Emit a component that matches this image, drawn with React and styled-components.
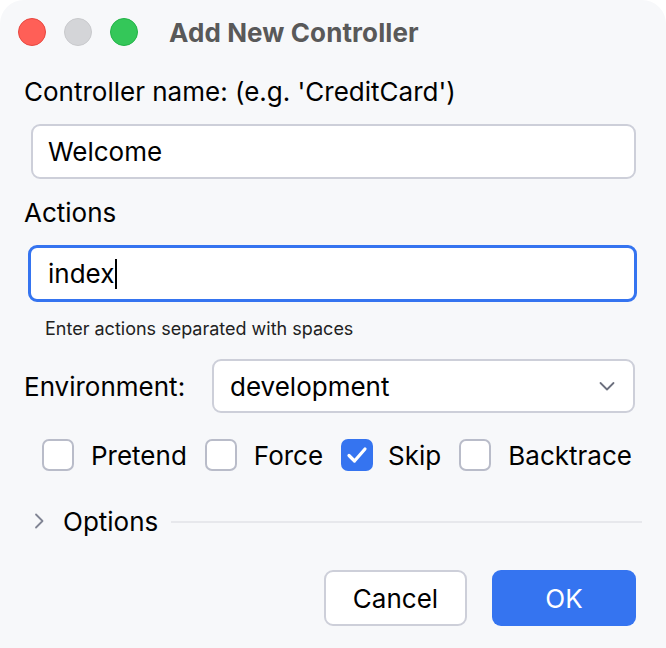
import React from "react";
import styled, { createGlobalStyle } from "styled-components";

const GlobalStyle = createGlobalStyle`
  html, body {
    margin: 0;
    padding: 0;
    background: #ffffff;
  }
  * {
    box-sizing: border-box;
  }
`;

const Window = styled.div`
  width: 666px;
  height: 648px;
  background: #f7f8fa;
  border-top-left-radius: 24px;
  border-top-right-radius: 24px;
  font-family: Inter, "Noto Sans", sans-serif;
  color: #000;
  display: flex;
  flex-direction: column;
  overflow: hidden;
`;

const TitleBar = styled.div`
  height: 64px;
  display: flex;
  align-items: center;
  padding-left: 18px;
  flex-shrink: 0;
`;

const Lights = styled.div`
  display: flex;
  gap: 18px;
`;

const Light = styled.div`
  width: 28px;
  height: 28px;
  border-radius: 50%;
  background: ${(p) => p.color};
  border: 1px solid ${(p) => p.edge};
`;

const Title = styled.div`
  margin-left: 31px;
  font-size: 26px;
  font-weight: 700;
  color: #595959;
  letter-spacing: 0.1px;
`;

const Body = styled.div`
  padding: 0 0 0 24px;
  display: flex;
  flex-direction: column;
`;

const Label = styled.div`
  font-size: 26px;
  line-height: 30px;
  margin-top: ${(p) => p.top}px;
`;

const Field = styled.div`
  height: ${(p) => (p.focused ? 57 : 55)}px;
  margin-top: 17px;
  margin-left: ${(p) => (p.focused ? 4 : 7)}px;
  margin-right: ${(p) => (p.focused ? 29 : 30)}px;
  background: #fff;
  border: ${(p) => (p.focused ? "3px solid #3574f0" : "2px solid #cdcfd9")};
  border-radius: 9px;
  display: flex;
  align-items: center;
  padding-left: ${(p) => (p.focused ? 17 : 15)}px;
  font-size: 26px;
`;

const Caret = styled.span`
  display: inline-block;
  width: 2px;
  height: 30px;
  background: #000;
  margin-left: 1px;
`;

const Hint = styled.div`
  font-size: 18px;
  line-height: 20px;
  margin-top: 17px;
  margin-left: 21px;
  color: #222;
`;

const EnvRow = styled.div`
  display: flex;
  align-items: center;
  margin-top: 20px;
  margin-right: 31px;
`;

const EnvLabel = styled.div`
  width: 188px;
  font-size: 26px;
  flex-shrink: 0;
`;

const Select = styled.div`
  flex: 1;
  height: 54px;
  background: #fff;
  border: 2px solid #cdcfd9;
  border-radius: 9px;
  display: flex;
  align-items: center;
  justify-content: space-between;
  padding: 0 18px 0 16px;
  font-size: 26px;
`;

const CheckRow = styled.div`
  display: flex;
  align-items: center;
  height: 32px;
  margin-top: 26px;
  padding-left: 18px;
`;

const CheckItem = styled.label`
  display: flex;
  align-items: center;
  gap: ${(p) => (p.checked ? 15 : 17)}px;
  margin-right: 18px;
  font-size: 26px;
`;

const Box = styled.span`
  width: 32px;
  height: 32px;
  border-radius: 7px;
  background: ${(p) => (p.checked ? "#3574f0" : "#fff")};
  border: ${(p) => (p.checked ? "none" : "2px solid #b9bcc9")};
  display: flex;
  align-items: center;
  justify-content: center;
`;

const OptionsRow = styled.div`
  display: flex;
  align-items: center;
  height: 30px;
  margin-top: 35px;
  padding-left: 10px;
  margin-right: 24px;
`;

const OptionsText = styled.span`
  font-size: 26px;
  margin-left: 19px;
`;

const Divider = styled.div`
  flex: 1;
  height: 2px;
  background: #e7e8ec;
  margin-left: 13px;
  margin-top: 2px;
`;

const Buttons = styled.div`
  display: flex;
  justify-content: flex-end;
  gap: 25px;
  margin-top: 34px;
  margin-right: 30px;
`;

const Button = styled.button`
  width: ${(p) => p.w}px;
  height: 56px;
  border-radius: 9px;
  font-family: Inter, "Noto Sans", sans-serif;
  font-size: 26px;
  background: ${(p) => (p.primary ? "#3574f0" : "#fff")};
  color: ${(p) => (p.primary ? "#fff" : "#000")};
  border: ${(p) => (p.primary ? "none" : "2px solid #cdcfd9")};
  padding: 0;
`;

const Check = () => (
  <svg width="22" height="18" viewBox="0 0 22 18">
    <path
      d="M3 9.5 L8.5 15 L19 3"
      fill="none"
      stroke="#fff"
      strokeWidth="3.2"
      strokeLinecap="round"
      strokeLinejoin="round"
    />
  </svg>
);

const ChevronDown = () => (
  <svg width="16" height="10" viewBox="0 0 16 10">
    <path
      d="M1.5 2 L8 8.5 L14.5 2"
      fill="none"
      stroke="#6c707e"
      strokeWidth="1.8"
      strokeLinecap="round"
      strokeLinejoin="round"
    />
  </svg>
);

const ChevronRight = () => (
  <svg width="10" height="16" viewBox="0 0 10 16">
    <path
      d="M2 1.5 L8.5 8 L2 14.5"
      fill="none"
      stroke="#818594"
      strokeWidth="1.8"
      strokeLinecap="round"
      strokeLinejoin="round"
    />
  </svg>
);

const flags = [
  { name: "Pretend", checked: false },
  { name: "Force", checked: false },
  { name: "Skip", checked: true },
  { name: "Backtrace", checked: false },
];

const App = () => {
  return (
    <>
      <GlobalStyle />
      <Window>
        <TitleBar>
          <Lights>
            <Light color="#ff5f57" edge="#e7473f" />
            <Light color="#d4d5d8" edge="#c8c9cc" />
            <Light color="#34c759" edge="#22b347" />
          </Lights>
          <Title>Add New Controller</Title>
        </TitleBar>
        <Body>
          <Label top={13}>Controller name: (e.g. 'CreditCard')</Label>
          <Field>Welcome</Field>
          <Label top={19}>Actions</Label>
          <Field focused>
            index
            <Caret />
          </Field>
          <Hint>Enter actions separated with spaces</Hint>
          <EnvRow>
            <EnvLabel>Environment:</EnvLabel>
            <Select>
              development
              <ChevronDown />
            </Select>
          </EnvRow>
          <CheckRow>
            {flags.map((f) => (
              <CheckItem key={f.name} checked={f.checked}>
                <Box checked={f.checked}>{f.checked ? <Check /> : null}</Box>
                {f.name}
              </CheckItem>
            ))}
          </CheckRow>
          <OptionsRow>
            <ChevronRight />
            <OptionsText>Options</OptionsText>
            <Divider />
          </OptionsRow>
          <Buttons>
            <Button w={143}>Cancel</Button>
            <Button w={144} primary>
              OK
            </Button>
          </Buttons>
        </Body>
      </Window>
    </>
  );
};

export default App;
